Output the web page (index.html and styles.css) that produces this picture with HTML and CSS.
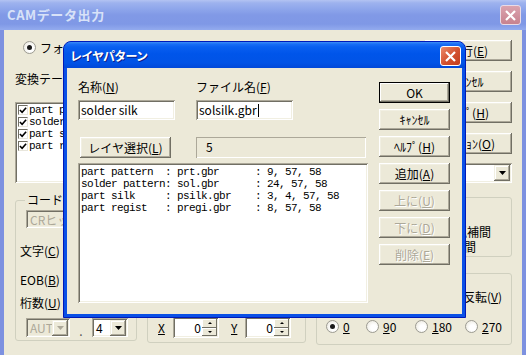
FILE: index.html
```html
<!DOCTYPE html>
<html>
<head>
  <meta charset="UTF-8">
  <title>CAMデータ出力</title>
  <link rel="stylesheet" href="styles.css">
</head>
<body>
  <div class="bg-window">
    <div class="titlebar inactive">
      <span class="bg-title">CAMデータ出力</span>
      <span class="close-btn inactive-close">
        <svg width="13" height="13" viewBox="0 0 13 13"><path d="M2 2L11 11M11 2L2 11" stroke="#fff" stroke-width="2.2"/></svg>
      </span>
    </div>
    <div class="bg-frame">
      <div class="bg-client">
        <div class="bg-top">
          <div class="radio-row"><span class="radio checked"></span><span>フォトプロッタ(<u>P</u>)</span></div>
          <div class="bg-label">変換テーブル(<u>T</u>)</div>
          <div class="checklist sunken">
            <div class="check-item"><span class="checkbox"><svg width="9" height="9" viewBox="0 0 9 9"><path d="M1 4L3.5 6.5L8 1.5" stroke="#000" stroke-width="1.8" fill="none"/></svg></span>part pattern</div>
            <div class="check-item"><span class="checkbox"><svg width="9" height="9" viewBox="0 0 9 9"><path d="M1 4L3.5 6.5L8 1.5" stroke="#000" stroke-width="1.8" fill="none"/></svg></span>solder pattern</div>
            <div class="check-item"><span class="checkbox"><svg width="9" height="9" viewBox="0 0 9 9"><path d="M1 4L3.5 6.5L8 1.5" stroke="#000" stroke-width="1.8" fill="none"/></svg></span>part silk</div>
            <div class="check-item"><span class="checkbox"><svg width="9" height="9" viewBox="0 0 9 9"><path d="M1 4L3.5 6.5L8 1.5" stroke="#000" stroke-width="1.8" fill="none"/></svg></span>part regist</div>
          </div>
        </div>

        <div class="bg-side">
          <button class="btn">実行(<u>E</u>)</button>
          <button class="btn">ｷｬﾝｾﾙ</button>
          <button class="btn">ﾍﾙﾌﾟ(<u>H</u>)</button>
          <button class="btn">ｵﾌﾟｼｮﾝ(<u>O</u>)</button>
          <div class="combo side-combo">
            <span class="combo-text"></span>
            <span class="drop-btn"><svg width="7" height="4" viewBox="0 0 7 4"><polygon points="0,0 7,0 3.5,4" fill="#000"/></svg></span>
          </div>
        </div>

        <fieldset class="group code-group">
          <legend>コード</legend>
          <div class="combo disabled cr-combo">
            <span class="combo-text">CRヒット</span>
            <span class="drop-btn"><svg width="7" height="4" viewBox="0 0 7 4"><polygon points="0,0 7,0 3.5,4" fill="#aca899"/></svg></span>
          </div>
          <div class="code-label first">文字(<u>C</u>)</div>
          <div class="code-label">EOB(<u>B</u>)</div>
          <div class="code-label last">桁数(<u>U</u>)</div>
          <div class="digits-row">
            <div class="combo disabled auto-combo">
              <span class="combo-text">AUTO</span>
              <span class="drop-btn"><svg width="7" height="4" viewBox="0 0 7 4"><polygon points="0,0 7,0 3.5,4" fill="#aca899"/></svg></span>
            </div>
            <span class="dot">.</span>
            <div class="combo digit-combo">
              <span class="combo-text">4</span>
              <span class="drop-btn"><svg width="7" height="4" viewBox="0 0 7 4"><polygon points="0,0 7,0 3.5,4" fill="#000"/></svg></span>
            </div>
          </div>
        </fieldset>

        <fieldset class="group interp-group">
          <div class="interp-row one">円弧補間</div>
          <div class="interp-row two">直線補間</div>
        </fieldset>

        <fieldset class="group offset-group">
          <div class="offset-row">
            <span class="axis"><u>X</u></span>
            <div class="spin sunken"><span class="spin-text">0</span><span class="spin-btns"><span class="spin-up"></span><span class="spin-down"></span></span></div>
            <span class="axis y-axis"><u>Y</u></span>
            <div class="spin sunken"><span class="spin-text">0</span><span class="spin-btns"><span class="spin-up"></span><span class="spin-down"></span></span></div>
          </div>
        </fieldset>

        <fieldset class="group rotate-group">
          <div class="mirror-row">ミラー反転(<u>V</u>)</div>
          <div class="angle-row">
            <div class="angle"><span class="radio checked"></span><span><u>0</u></span></div>
            <div class="angle"><span class="radio"></span><span><u>9</u>0</span></div>
            <div class="angle"><span class="radio"></span><span><u>1</u>80</span></div>
            <div class="angle"><span class="radio"></span><span><u>2</u>70</span></div>
          </div>
        </fieldset>
      </div>
    </div>
  </div>

  <div class="dialog">
    <div class="dlg-title">
      <span class="dlg-title-text">レイヤパターン</span>
      <span class="close-btn active-close">
        <svg width="13" height="13" viewBox="0 0 13 13"><path d="M2 2L11 11M11 2L2 11" stroke="#fff" stroke-width="2.2"/></svg>
      </span>
    </div>
    <div class="dlg-body">
      <div class="dlg-main">
        <div class="name-grid">
          <div class="field-label">名称(<u>N</u>)</div>
          <div class="field-label">ファイル名(<u>F</u>)</div>
          <div class="edit sunken">solder silk</div>
          <div class="edit sunken">solsilk.gbr<span class="caret"></span></div>
        </div>
        <div class="layer-row">
          <button class="btn layer-btn">レイヤ選択(<u>L</u>)</button>
          <div class="count-field">5</div>
        </div>
        <div class="pattern-list sunken">part pattern  : prt.gbr      : 9, 57, 58
solder pattern: sol.gbr      : 24, 57, 58
part silk     : psilk.gbr    : 3, 4, 57, 58
part regist   : pregi.gbr    : 8, 57, 58</div>
      </div>
      <div class="dlg-buttons">
        <button class="btn default">OK</button>
        <button class="btn">ｷｬﾝｾﾙ</button>
        <button class="btn">ﾍﾙﾌﾟ(<u>H</u>)</button>
        <button class="btn">追加(<u>A</u>)</button>
        <button class="btn" disabled>上に(<u>U</u>)</button>
        <button class="btn" disabled>下に(<u>D</u>)</button>
        <button class="btn" disabled>削除(<u>E</u>)</button>
      </div>
    </div>
  </div>
</body>
</html>
```

FILE: styles.css
```css
* {
  box-sizing: border-box;
}
body {
  margin: 0;
  width: 526px;
  height: 355px;
  overflow: hidden;
  position: relative;
  background: #ece9d8;
  font-family: "Noto Sans CJK JP", "Liberation Sans", sans-serif;
  font-size: 12px;
  line-height: 13px;
  color: #000;
}
u {
  text-decoration: underline;
  text-underline-offset: 1px;
}
/* Common controls */
.btn {
  display: flex;
  align-items: center;
  justify-content: center;
  height: 21px;
  padding: 0;
  margin: 0;
  border: none;
  background: #ece9d8;
  font-family: inherit;
  font-size: 12px;
  color: #000;
  box-shadow: inset -1px -1px #716f64, inset 1px 1px #fff, inset -2px -2px #aca899, inset 2px 2px #f1efe2;
}
.btn.default {
  border: 1px solid #000;
  box-shadow: inset -1px -1px #716f64, inset 1px 1px #fff, inset -2px -2px #aca899;
}
.btn:disabled {
  color: #aca899;
  text-shadow: 1px 1px #fff;
}
.sunken {
  background: #fff;
  box-shadow: inset 1px 1px #aca899, inset -1px -1px #fff, inset 2px 2px #716f64, inset -2px -2px #f1efe2;
}
.radio {
  display: inline-block;
  width: 13px;
  height: 13px;
  border-radius: 50%;
  border: 1px solid #9c9b92;
  background: radial-gradient(circle at 60% 60%, #fff 30%, #e6e3d6 100%);
  position: relative;
  flex: none;
}
.radio.checked::after {
  content: "";
  position: absolute;
  left: 3px;
  top: 3px;
  width: 5px;
  height: 5px;
  border-radius: 50%;
  background: #1a1a1a;
}
.combo {
  display: flex;
  align-items: center;
  height: 20px;
  padding: 2px;
  background: #fff;
  box-shadow: inset 1px 1px #aca899, inset -1px -1px #fff, inset 2px 2px #716f64, inset -2px -2px #f1efe2;
}
.combo.disabled {
  background: #ece9d8;
  color: #aca899;
}
.combo-text {
  flex: 1;
  overflow: hidden;
  white-space: nowrap;
  padding-left: 2px;
}
.drop-btn {
  width: 16px;
  height: 16px;
  flex: none;
  display: flex;
  align-items: center;
  justify-content: center;
  background: #ece9d8;
  box-shadow: inset -1px -1px #716f64, inset 1px 1px #f1efe2, inset -2px -2px #aca899, inset 2px 2px #fff;
}
.group {
  margin: 0;
  padding: 0;
  border: 1px solid #d0d0bf;
  border-radius: 3px;
  min-width: 0;
}
.group legend {
  padding: 0 2px;
  margin-left: 5px;
  line-height: 14px;
}
.close-btn {
  width: 21px;
  height: 20px;
  border-radius: 3px;
  display: flex;
  align-items: center;
  justify-content: center;
}
/* Background window */
.bg-window {
  width: 526px;
  height: 355px;
}
.titlebar.inactive {
  height: 30px;
  display: flex;
  align-items: flex-start;
  justify-content: space-between;
  padding: 0 5px 0 7px;
  background: linear-gradient(#b3c3f2 0, #9db2ee 3px, #8ea6eb 9px, #8199e6 50%, #7f98e6 80%, #93abee 100%);
}
.bg-title {
  margin-top: 8px;
  font-weight: bold;
  font-size: 13px;
  letter-spacing: 0.6px;
  color: #d8e2f8;
}
.inactive-close {
  margin-top: 5px;
  border: 1px solid #e9dbe6;
  background: linear-gradient(#dba3ae, #c7828f);
}
.bg-frame {
  height: 325px;
  border-left: 4px solid #7d91e0;
  border-right: 4px solid #7d91e0;
}
.bg-client {
  display: grid;
  grid-template-columns: 122px 159px 99px 87px;
  grid-template-rows: 155px 80px 72px;
  column-gap: 10px;
  padding: 8px 0 0 11px;
}
.bg-top {
  grid-column: 1 / 4;
  grid-row: 1;
}
.radio-row {
  display: flex;
  align-items: center;
  gap: 4px;
  margin: 3px 0 0 8px;
  height: 13px;
}
.bg-label {
  margin-top: 18px;
}
.checklist {
  margin-top: 17px;
  height: 81px;
  padding: 2px 0 0 3px;
  font-family: "Liberation Mono", monospace;
  font-size: 11px;
  letter-spacing: -0.6px;
}
.check-item {
  display: flex;
  align-items: center;
  height: 12px;
  gap: 1px;
}
.checkbox {
  width: 10px;
  height: 10px;
  display: flex;
  align-items: center;
  justify-content: center;
  background: #fff;
  border: 1px solid;
  border-color: #716f64 #e8e6dc #e8e6dc #716f64;
}
.bg-side {
  grid-column: 4;
  grid-row: 1;
  display: flex;
  flex-direction: column;
  gap: 10px;
  padding-top: 2px;
}
.side-combo {
  margin-top: -1px;
}
.code-group {
  grid-column: 1;
  grid-row: 2 / 4;
  margin-bottom: 4px;
  padding-left: 4px;
}
.cr-combo {
  width: 100px;
  height: 18px;
  margin: 3px 0 0 6px;
}
.code-label {
  margin-top: 16px;
}
.code-label.first {
  margin-top: 16px;
}
.code-label.last {
  margin-top: 10px;
}
.digits-row {
  display: flex;
  align-items: center;
  margin: 9px 0 0 6px;
}
.auto-combo {
  width: 44px;
  height: 19px;
}
.dot {
  width: 22px;
  text-align: center;
  padding-top: 6px;
  color: #555;
}
.digit-combo {
  width: 36px;
  height: 19px;
}
.interp-group {
  grid-column: 4;
  grid-row: 2;
  margin: 4px 0 16px -40px;
  padding-top: 27px;
}
.interp-row.one {
  padding-left: 57px;
}
.interp-row.two {
  padding-left: 42px;
  margin-top: 2px;
}
.offset-group {
  grid-column: 2;
  grid-row: 3;
  margin-bottom: 2px;
  display: flex;
  flex-direction: column;
  justify-content: flex-end;
}
.offset-row {
  display: flex;
  align-items: center;
  padding: 0 0 4px 10px;
}
.axis {
  width: 15px;
}
.y-axis {
  margin-left: 12px;
  width: 14px;
}
.spin {
  display: flex;
  align-items: center;
  width: 46px;
  height: 21px;
  padding: 2px;
}
.spin-text {
  flex: 1;
  text-align: right;
  padding-right: 1px;
}
.spin-btns {
  display: flex;
  flex-direction: column;
  width: 15px;
  height: 17px;
}
.spin-up,
.spin-down {
  flex: 1;
  background: #ece9d8;
  box-shadow: inset -1px -1px #716f64, inset 1px 1px #fff;
  position: relative;
}
.spin-up::after,
.spin-down::after {
  content: "";
  position: absolute;
  left: 6px;
  top: 3px;
  border-left: 2px solid transparent;
  border-right: 2px solid transparent;
}
.spin-up::after {
  border-bottom: 2px solid #000;
}
.spin-down::after {
  border-top: 2px solid #000;
}
.rotate-group {
  grid-column: 3 / 5;
  grid-row: 3;
  padding-top: 16px;
}
.mirror-row {
  padding-left: 110px;
}
.angle-row {
  display: grid;
  grid-template-columns: 40px 49px 50px auto;
  margin: 17px 0 0 9px;
}
.angle {
  display: flex;
  align-items: center;
  gap: 4px;
}
/* Layer pattern dialog */
.dialog {
  position: absolute;
  left: 63px;
  top: 41px;
  width: 403px;
  height: 277px;
  background: #0a50e6;
  border: 1px solid #0019b8;
  border-radius: 8px 8px 0 0;
  padding: 0 3px 3px;
}
.dlg-title {
  height: 26px;
  margin: 0 -3px;
  border-radius: 7px 7px 0 0;
  display: flex;
  align-items: flex-start;
  justify-content: space-between;
  padding: 0 4px 0 6px;
  background: linear-gradient(#3d8ff7 0, #1a6ef5 2px, #0a5ff0 5px, #0055ea 45%, #0153e6 80%, #0148d9 100%);
}
.dlg-title-text {
  margin-top: 7px;
  font-weight: bold;
  font-size: 12px;
  letter-spacing: -0.8px;
  color: #fff;
  text-shadow: 1px 1px #0a1f8a;
}
.active-close {
  margin-top: 4px;
  border: 1px solid #fff;
  background: linear-gradient(135deg, #ec8b6c, #d2502e 55%, #c23c1d);
}
.dlg-body {
  height: 246px;
  background: #ece9d8;
  display: flex;
  gap: 11px;
  padding: 12px 12px 0 11px;
}
.dlg-main {
  width: 290px;
}
.name-grid {
  display: grid;
  grid-template-columns: 97px 97px;
  column-gap: 21px;
  row-gap: 6px;
}
.field-label {
  height: 14px;
  line-height: 14px;
}
.edit {
  height: 20px;
  line-height: 16px;
  padding: 2px 3px;
  display: flex;
  align-items: center;
}
.caret {
  width: 1px;
  height: 13px;
  background: #000;
  margin-left: 1px;
}
.layer-row {
  display: flex;
  margin-top: 17px;
}
.layer-btn {
  width: 91px;
  margin-left: 2px;
}
.count-field {
  width: 170px;
  height: 21px;
  margin-left: 25px;
  padding: 3px 0 0 10px;
  box-shadow: inset 1px 1px #aca899, inset -1px -1px #fff;
}
.pattern-list {
  margin-top: 5px;
  height: 140px;
  padding: 3px 3px 0;
  white-space: pre;
  font-family: "Liberation Mono", monospace;
  font-size: 11px;
  line-height: 12px;
  letter-spacing: -0.6px;
}
.dlg-buttons {
  width: 71px;
  display: flex;
  flex-direction: column;
  gap: 6px;
  padding-top: 2px;
}
```
